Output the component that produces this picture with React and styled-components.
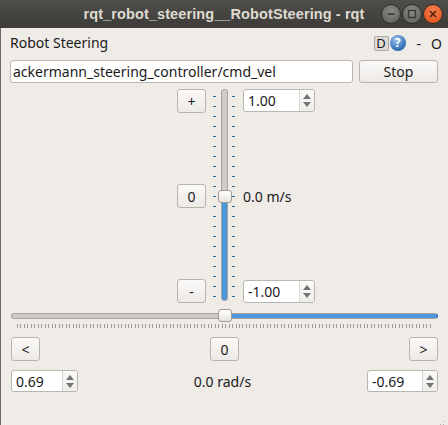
import React from "react";
import styled, { createGlobalStyle } from "styled-components";

const GlobalStyle = createGlobalStyle`
  html, body {
    margin: 0;
    padding: 0;
    background: #1d1c1a;
  }
  body {
    font-family: "Noto Sans", "DejaVu Sans", sans-serif;
    font-size: 14px;
    color: #1a1a1a;
  }
`;

const Frame = styled.div`
  width: 448px;
  height: 425px;
  display: flex;
  flex-direction: column;
  overflow: hidden;
  background: #1d1c1a;
`;

const TitleBar = styled.div`
  height: 28px;
  flex: none;
  display: grid;
  grid-template-columns: 1fr auto 1fr;
  align-items: center;
  background: linear-gradient(#4f4e4a, #3c3b37);
`;

const Title = styled.div`
  grid-column: 2;
  font-family: "Liberation Sans", sans-serif;
  font-weight: bold;
  font-size: 14.5px;
  color: #dfdbd2;
  letter-spacing: 0.1px;
`;

const WindowButtons = styled.div`
  grid-column: 3;
  justify-self: end;
  display: flex;
  gap: 1px;
  padding-right: 5px;
`;

const WinButton = styled.div`
  width: 18px;
  height: 18px;
  border-radius: 50%;
  display: flex;
  align-items: center;
  justify-content: center;
  background: ${(p) =>
    p.$close
      ? "radial-gradient(circle at 50% 35%, #f5814f, #df4a16)"
      : "radial-gradient(circle at 50% 35%, #8c8a85, #5d5b56)"};
  border: 1px solid #2d2c29;
`;

const Body = styled.div`
  flex: none;
  height: 395px;
  background: #efebe7;
  border-left: 1px solid #6e6c67;
  padding: 6px 10px 0 9px;
  display: flex;
  flex-direction: column;
  position: relative;
`;

const HeaderRow = styled.div`
  height: 18px;
  display: flex;
  align-items: center;
  justify-content: space-between;
  margin-right: -4px;
`;

const DockTitle = styled.span`
  font-size: 14px;
  margin-top: -1px;
`;

const DockTools = styled.div`
  display: flex;
  align-items: center;
`;

const DBox = styled.span`
  width: 13px;
  height: 13px;
  border: 1px solid #a9a6a0;
  border-radius: 2px;
  background: #dedbd6;
  font-size: 13px;
  line-height: 13px;
  display: flex;
  justify-content: center;
`;

const Help = styled.span`
  width: 16px;
  height: 16px;
  border-radius: 50%;
  margin-left: 1px;
  background: radial-gradient(circle at 40% 30%, #9cc3ec, #2f6cb5 70%);
  color: #fff;
  font-size: 12px;
  font-weight: bold;
  line-height: 16px;
  text-align: center;
`;

const DockGlyph = styled.span`
  font-size: 14px;
  margin-left: ${(p) => p.$gap}px;
`;

const TopicRow = styled.div`
  display: flex;
  gap: 6px;
  margin-top: 8px;
  height: 23px;
`;

const LineEdit = styled.div`
  flex: 1;
  background: #fff;
  border: 1px solid #bab6b0;
  border-radius: 3px;
  padding-left: 2px;
  display: flex;
  align-items: center;
  font-size: 14px;
`;

const PushButton = styled.div`
  width: ${(p) => p.$w}px;
  height: ${(p) => p.$h || 24}px;
  box-sizing: border-box;
  border: 1px solid #b7b3ad;
  border-radius: 3px;
  background: linear-gradient(#fbfaf9, #ece9e6);
  display: flex;
  align-items: center;
  justify-content: center;
  font-size: 14px;
  flex: none;
`;

const LinearBlock = styled.div`
  display: flex;
  margin-top: 6px;
  margin-left: 167px;
  height: 214px;
`;

const SideColumn = styled.div`
  display: flex;
  flex-direction: column;
  justify-content: space-between;
  align-items: flex-start;
  width: ${(p) => p.$w}px;
`;

const VSlider = styled.div`
  width: 26px;
  margin-left: 5px;
  margin-right: 6px;
  display: flex;
  padding-left: 2px;
  box-sizing: border-box;
`;

const VTicks = styled.div`
  width: 3px;
  margin-top: 7px;
  height: 201px;
  display: flex;
  flex-direction: column;
  justify-content: space-between;
  margin-right: ${(p) => p.$mr || 0}px;
`;

const VTick = styled.div`
  height: 1px;
  background: #35668f;
`;

const VGroove = styled.div`
  width: 7px;
  height: 212px;
  box-sizing: border-box;
  margin-right: 4px;
  border-radius: 3px;
  position: relative;
  border: 1px solid ${(p) => p.$border};
  background: linear-gradient(#cfcbc5 0 107px, #4a97dc 107px);
`;

const Handle = styled.div`
  position: absolute;
  width: 14px;
  height: 13px;
  box-sizing: border-box;
  border: 1px solid #9e9a94;
  border-radius: 3px;
  background: linear-gradient(#ffffff, #e8e5e1);
  left: ${(p) => p.$left}px;
  top: ${(p) => p.$top}px;
`;

const SpinBox = styled.div`
  width: ${(p) => p.$w}px;
  height: ${(p) => p.$h}px;
  box-sizing: border-box;
  background: #fff;
  border: 1px solid #b9b5af;
  border-radius: 3px;
  display: flex;
  flex: none;
`;

const SpinText = styled.div`
  flex: 1;
  display: flex;
  align-items: center;
  padding-left: 4px;
  font-size: 14px;
`;

const SpinArrows = styled.div`
  width: 14px;
  border-left: 1px solid #d9d5cf;
  background: linear-gradient(#fafaf9, #efedea);
  border-radius: 0 3px 3px 0;
  display: flex;
  flex-direction: column;
  align-items: center;
  justify-content: center;
  gap: 3px;
`;

const Arrow = styled.div`
  width: 0;
  height: 0;
  border-left: 4px solid transparent;
  border-right: 4px solid transparent;
  ${(p) =>
    p.$down
      ? "border-top: 5px solid #737373;"
      : "border-bottom: 5px solid #737373;"}
`;

const Readout = styled.div`
  font-size: 14px;
  height: 24px;
  display: flex;
  align-items: center;
`;

const HSlider = styled.div`
  margin-top: 7px;
  margin-left: 1px;
  height: 18px;
  display: flex;
  flex-direction: column;
`;

const HGrooveWrap = styled.div`
  height: 12px;
  display: flex;
  align-items: center;
  position: relative;
`;

const HGroove = styled.div`
  flex: 1;
  height: 6px;
  box-sizing: border-box;
  border-radius: 3px;
  border: 1px solid #a9a5a0;
  background: linear-gradient(
    to right,
    #cfcbc5 0 50%,
    #4a97dc 50%
  );
  border-right-color: #2e6ca6;
`;

const HTicks = styled.div`
  margin: 2px 6px 0 6px;
  height: 4px;
  display: flex;
  justify-content: space-between;
`;

const HTick = styled.div`
  width: 1px;
  background: #9d9993;
`;

const StepRow = styled.div`
  margin-top: 9px;
  margin-left: 1px;
  display: flex;
  justify-content: space-between;
`;

const AngularRow = styled.div`
  margin-top: 8px;
  margin-left: 1px;
  display: flex;
  justify-content: space-between;
  align-items: center;
`;

const Grip = styled.div`
  position: absolute;
  right: 2px;
  bottom: 2px;
  width: 10px;
  height: 10px;
  background: radial-gradient(circle, #b4b0aa 0.8px, transparent 1px) 0 0 / 3px 3px;
  clip-path: polygon(100% 0, 100% 100%, 0 100%);
`;

const Spin = ({ value, w, h }) => (
  <SpinBox $w={w} $h={h}>
    <SpinText>{value}</SpinText>
    <SpinArrows>
      <Arrow />
      <Arrow $down />
    </SpinArrows>
  </SpinBox>
);

export default function App() {
  return (
    <Frame>
      <GlobalStyle />
      <TitleBar>
        <Title>rqt_robot_steering__RobotSteering - rqt</Title>
        <WindowButtons>
          <WinButton>
            <svg width="10" height="10" viewBox="0 0 10 10">
              <path d="M1.5 5h7" stroke="#3a3935" strokeWidth="1.6" />
            </svg>
          </WinButton>
          <WinButton>
            <svg width="10" height="10" viewBox="0 0 10 10">
              <rect x="1.5" y="1.5" width="7" height="7" fill="none" stroke="#3a3935" strokeWidth="1.4" />
            </svg>
          </WinButton>
          <WinButton $close>
            <svg width="10" height="10" viewBox="0 0 10 10">
              <path d="M2 2l6 6M8 2l-6 6" stroke="#5a1c06" strokeWidth="1.6" />
            </svg>
          </WinButton>
        </WindowButtons>
      </TitleBar>
      <Body>
        <HeaderRow>
          <DockTitle>Robot Steering</DockTitle>
          <DockTools>
            <DBox>D</DBox>
            <Help>?</Help>
            <DockGlyph $gap={11}>-</DockGlyph>
            <DockGlyph $gap={10}>O</DockGlyph>
          </DockTools>
        </HeaderRow>
        <TopicRow>
          <LineEdit>ackermann_steering_controller/cmd_vel</LineEdit>
          <PushButton $w={79} $h={23}>Stop</PushButton>
        </TopicRow>
        <LinearBlock>
          <SideColumn $w={29}>
            <PushButton $w={29}>+</PushButton>
            <PushButton $w={29}>0</PushButton>
            <PushButton $w={29}>-</PushButton>
          </SideColumn>
          <VSlider>
            <VTicks $mr={5}>
              {Array.from({ length: 21 }, (_, i) => (
                <VTick key={i} />
              ))}
            </VTicks>
            <VGroove $border="#a8a49e">
              <Handle $left={-4} $top={100} />
            </VGroove>
            <VTicks>
              {Array.from({ length: 21 }, (_, i) => (
                <VTick key={i} />
              ))}
            </VTicks>
          </VSlider>
          <SideColumn $w={72}>
            <Spin value="1.00" w={72} h={23} />
            <Readout>0.0 m/s</Readout>
            <Spin value="-1.00" w={72} h={23} />
          </SideColumn>
        </LinearBlock>
        <HSlider>
          <HGrooveWrap>
            <HGroove />
            <Handle $left={207} $top={-1} />
          </HGrooveWrap>
          <HTicks>
            {Array.from({ length: 120 }, (_, i) => (
              <HTick key={i} />
            ))}
          </HTicks>
        </HSlider>
        <StepRow>
          <PushButton $w={29}>&lt;</PushButton>
          <PushButton $w={29}>0</PushButton>
          <PushButton $w={29}>&gt;</PushButton>
        </StepRow>
        <AngularRow>
          <Spin value="0.69" w={67} h={22} />
          <Readout>0.0 rad/s</Readout>
          <Spin value="-0.69" w={71} h={22} />
        </AngularRow>
        <Grip />
      </Body>
    </Frame>
  );
}
